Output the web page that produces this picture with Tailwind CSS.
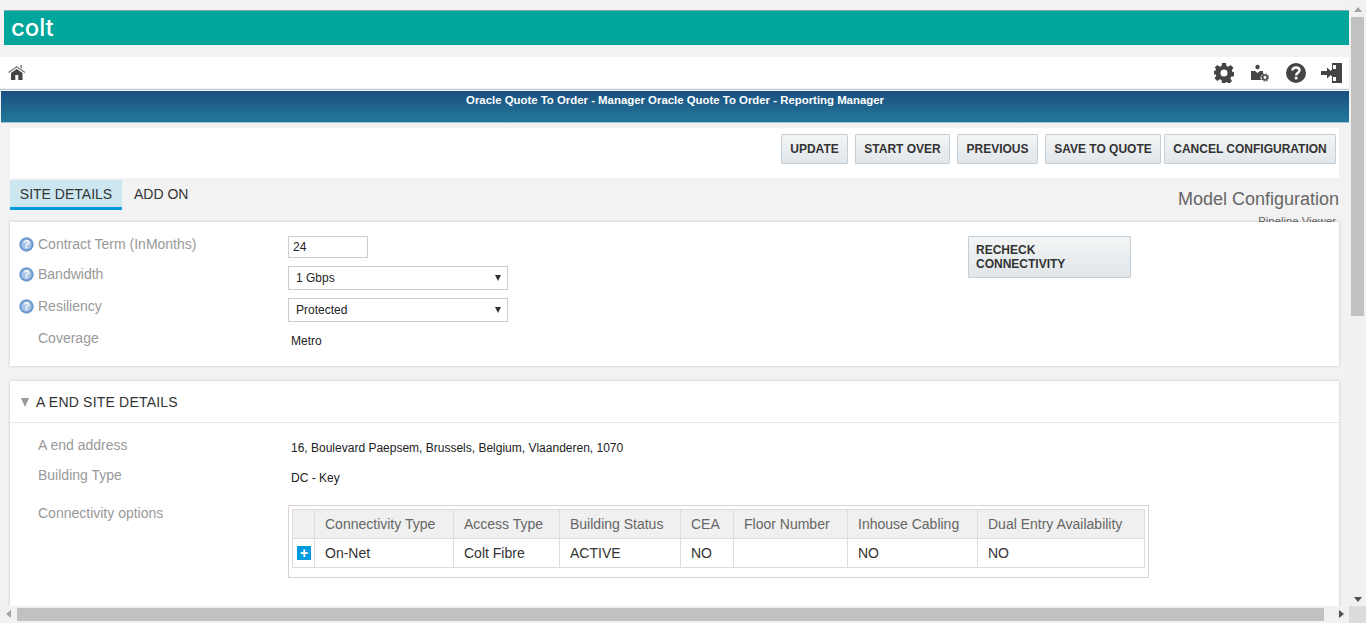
<!DOCTYPE html>
<html>
<head>
<meta charset="utf-8">
<title>Model Configuration</title>
<script src="https://cdn.jsdelivr.net/npm/@tailwindcss/browser@4"></script>
</head>
<body class="relative w-[1366px] h-[623px] overflow-hidden bg-[#f2f2f2] font-['Liberation_Sans',Arial,sans-serif] text-[#222]">

<div class="w-[1349px] h-[623px] overflow-hidden">
    <!-- Logo bar -->
    <div class="ml-[4px] mt-[10px] w-[1345px] h-[35px] bg-[#00a69c] border-t border-[#7fa9b5] pl-[7px] flex items-center">
        <span class="font-['Inter',sans-serif] font-medium text-[24px] leading-none text-white tracking-[-0.1px]">colt</span>
    </div>

    <!-- Icon bar -->
    <div class="mt-[12px] h-[31px] bg-white flex items-center justify-between pl-[8px] pr-[7px]">
        <svg class="w-[18px] h-[17px]" viewBox="0 0 18 17"><path fill="none" stroke="#777" stroke-width="1.300" d="M0.500 8.500 8.800 2.800l8.200 5.700"/><path fill="#777" d="M12.500 1h1.500v3.500l-1.500-1z"/><path fill="#444" fill-rule="evenodd" d="M8.800 5 14.500 9v7H3V9zM7.300 11v5h3v-5z"/></svg>
        <div class="flex items-center">
            <svg class="w-[20px] h-[20px]" viewBox="0 0 20 20"><path fill="#444" fill-rule="evenodd" d="M8 0h4l.5 3 1.700.7L16.700 2l2.800 2.800-1.700 2.500.7 1.700 1.500.3v4l-3 .5-.7 1.700 1.700 2.500-2.800 2.800-2.500-1.700-1.700.7L12 20H8l-.5-3-1.700-.7L3.300 18 .5 15.200l1.700-2.500-.7-1.700L0 12V8l1.500-.5.7-1.700L.5 4.800 3.300 2l2.500 1.700L7.500 3zM10 6.500a3.500 3.500 0 1 0 0 7 3.500 3.500 0 0 0 0-7z"/></svg>
            <svg class="ml-[17px] w-[18px] h-[18px]" viewBox="0 0 18 18"><circle cx="6.500" cy="3" r="2.200" fill="#444"/><path fill="#444" d="M0 7h4l2.500 2L9 7h3v3.200a4.500 4.500 0 0 0-2 5.800H0z"/><circle cx="14" cy="13.500" r="2.300" fill="none" stroke="#555" stroke-width="1.800"/><circle cx="14" cy="13.500" r="3.600" fill="none" stroke="#555" stroke-width="1.200" stroke-dasharray="1.400 1.400"/></svg>
            <svg class="ml-[17px] w-[20px] h-[20px]" viewBox="0 0 21 21"><circle cx="10.500" cy="10.500" r="10.500" fill="#444"/><path fill="none" stroke="#fff" stroke-width="2.600" d="M6.800 8c0-2.200 1.700-3.300 3.700-3.300s3.700 1.100 3.700 3c0 2.600-3.500 2.500-3.500 5.300"/><rect x="9.200" y="14.500" width="2.800" height="2.700" fill="#fff"/></svg>
            <svg class="ml-[15px] w-[21px] h-[20px]" viewBox="0 0 21 20"><path fill="#444" d="M11 0h10v20H11v-2h3V2h-3z"/><path fill="#444" d="M11 2h3v16h-3v-5h-1V7h1z"/><rect x="12" y="2" width="3" height="4" fill="#fff"/><rect x="12" y="14" width="3" height="4" fill="#fff"/><path fill="#444" d="M0 8h6V4.500L12 10l-6 5.500V12H0z"/></svg>
        </div>
    </div>

    <!-- Title bar -->
    <div class="mt-[1px] border-t border-[#bccbd8] pt-[1px]">
        <div class="ml-[1px] h-[32px] bg-gradient-to-b from-[#1a4f7f] to-[#24799b] text-center text-white text-[11.400px] font-bold leading-[19px] border-b border-[#a9bfcd]">Oracle Quote To Order - Manager Oracle Quote To Order - Reporting Manager</div>
    </div>

    <div class="pl-[10px] pr-[10px]">
        <!-- Action buttons -->
        <div class="mt-[5px] h-[50px] bg-white flex justify-end items-start pt-[6px] pr-[3px] text-[12px] font-bold text-[#333]">
            <button class="h-[30px] w-[67px] rounded-[1px] border border-[#c3ced6] bg-gradient-to-b from-[#f3f5f6] to-[#e2e6e9]">UPDATE</button>
            <button class="ml-[7px] h-[30px] w-[95px] rounded-[1px] border border-[#c3ced6] bg-gradient-to-b from-[#f3f5f6] to-[#e2e6e9]">START OVER</button>
            <button class="ml-[7px] h-[30px] w-[81px] rounded-[1px] border border-[#c3ced6] bg-gradient-to-b from-[#f3f5f6] to-[#e2e6e9]">PREVIOUS</button>
            <button class="ml-[7px] h-[30px] w-[116px] rounded-[1px] border border-[#c3ced6] bg-gradient-to-b from-[#f3f5f6] to-[#e2e6e9]">SAVE TO QUOTE</button>
            <button class="ml-[3px] h-[30px] w-[172px] rounded-[1px] border border-[#c3ced6] bg-gradient-to-b from-[#f3f5f6] to-[#e2e6e9]">CANCEL CONFIGURATION</button>
        </div>

        <!-- Tabs and page title -->
        <div class="relative h-[44px] flex items-start justify-between">
            <div class="flex mt-[2px] text-[14px] text-[#333]">
                <div class="w-[112px] h-[30px] bg-[#cde7f1] border-b-[3px] border-[#009bdf] text-center leading-[28px]">SITE DETAILS</div>
                <div class="ml-[12px] leading-[28px]">ADD ON</div>
            </div>
            <div class="text-right">
                <div class="text-[18px] leading-[20px] text-[#666] mt-[11px]">Model Configuration</div>
                <div class="text-[11.300px] leading-[12px] text-[#666] mt-[6px] mr-[3px]">Pipeline Viewer</div>
            </div>
        </div>

        <!-- Configuration card -->
        <div class="relative h-[144px] bg-white shadow-[0_0_3px_rgba(0,0,0,0.2)] pt-[14px] pl-[9px] text-[14px]">
            <div class="h-[32px] flex">
                <svg class="mt-[1px] w-[15px] h-[15px]" viewBox="0 0 15 15"><circle cx="7.500" cy="7.500" r="7.200" fill="#6d9bd0"/><circle cx="7.500" cy="7.500" r="5" fill="#a9c6e6"/><text x="7.500" y="11" text-anchor="middle" font-size="10" font-weight="bold" fill="#fff" font-family="Liberation Sans">?</text></svg>
                <span class="ml-[4px] w-[250px] leading-[17px] text-[#999]">Contract Term (InMonths)</span>
                <div class="w-[80px] h-[22px] border border-[#ccc] pl-[4px] text-[12px] leading-[20px]">24</div>
            </div>
            <div class="h-[32px] flex -mt-[2px]">
                <svg class="mt-[1px] w-[15px] h-[15px]" viewBox="0 0 15 15"><circle cx="7.500" cy="7.500" r="7.200" fill="#6d9bd0"/><circle cx="7.500" cy="7.500" r="5" fill="#a9c6e6"/><text x="7.500" y="11" text-anchor="middle" font-size="10" font-weight="bold" fill="#fff" font-family="Liberation Sans">?</text></svg>
                <span class="ml-[4px] w-[250px] leading-[17px] text-[#999]">Bandwidth</span>
                <div class="relative w-[220px] h-[24px] border border-[#ccc] pl-[7px] text-[12px] leading-[22px]">1 Gbps<span class="absolute right-[6px] top-[8px] w-0 h-0 border-x-[3px] border-t-[6px] border-x-transparent border-t-[#333]"></span></div>
            </div>
            <div class="h-[32px] flex">
                <svg class="mt-[1px] w-[15px] h-[15px]" viewBox="0 0 15 15"><circle cx="7.500" cy="7.500" r="7.200" fill="#6d9bd0"/><circle cx="7.500" cy="7.500" r="5" fill="#a9c6e6"/><text x="7.500" y="11" text-anchor="middle" font-size="10" font-weight="bold" fill="#fff" font-family="Liberation Sans">?</text></svg>
                <span class="ml-[4px] w-[250px] leading-[17px] text-[#999]">Resiliency</span>
                <div class="relative w-[220px] h-[24px] border border-[#ccc] pl-[7px] text-[12px] leading-[22px]">Protected<span class="absolute right-[6px] top-[8px] w-0 h-0 border-x-[3px] border-t-[6px] border-x-transparent border-t-[#333]"></span></div>
            </div>
            <div class="flex">
                <span class="ml-[19px] w-[250px] leading-[17px] text-[#999]">Coverage</span>
                <span class="ml-[3px] mt-[4px] text-[12px] leading-[14px]">Metro</span>
            </div>
            <button class="absolute left-[958px] top-[14px] w-[163px] h-[42px] rounded-[1px] border border-[#c3ced6] bg-gradient-to-b from-[#f3f5f6] to-[#e2e6e9] pl-[7px] text-left text-[12px] leading-[14px] font-bold text-[#333]">RECHECK<br>CONNECTIVITY</button>
        </div>

        <!-- A end site details -->
        <div class="mt-[15px] h-[240px] bg-white shadow-[0_0_3px_rgba(0,0,0,0.2)]">
            <div class="h-[42px] border-b border-[#e6e6e6] flex items-center pt-[1px] pl-[11px] text-[14px] text-[#333]">
                <span class="w-0 h-0 border-x-[4px] border-t-[9px] border-x-transparent border-t-[#999]"></span>
                <span class="ml-[7px] tracking-[0.2px]">A END SITE DETAILS</span>
            </div>
            <div class="pl-[28px] pt-[14px] text-[14px]">
                <div class="h-[30px] flex">
                    <span class="w-[253px] leading-[17px] text-[#999]">A end address</span>
                    <span class="mt-[4px] text-[12px] leading-[14px]">16, Boulevard Paepsem, Brussels, Belgium, Vlaanderen, 1070</span>
                </div>
                <div class="h-[38px] flex">
                    <span class="w-[253px] leading-[17px] text-[#999]">Building Type</span>
                    <span class="mt-[4px] text-[12px] leading-[14px]">DC - Key</span>
                </div>
                <div class="flex">
                    <span class="w-[250px] leading-[17px] text-[#999]">Connectivity options</span>
                    <div class="w-[861px] h-[73px] border border-[#dccfd4] p-[3px]">
                        <table class="w-[853px] table-fixed border-collapse text-[14px]">
                            <thead>
                                <tr class="h-[29px] bg-[#f0f0f0] text-left text-[#666]">
                                    <th class="w-[22px] border border-[#ddd] font-normal"></th>
                                    <th class="w-[139px] border border-[#ddd] pl-[10px] font-normal">Connectivity Type</th>
                                    <th class="w-[106px] border border-[#ddd] pl-[10px] font-normal">Access Type</th>
                                    <th class="w-[121px] border border-[#ddd] pl-[10px] font-normal">Building Status</th>
                                    <th class="w-[53px] border border-[#ddd] pl-[10px] font-normal">CEA</th>
                                    <th class="w-[114px] border border-[#ddd] pl-[10px] font-normal">Floor Number</th>
                                    <th class="w-[130px] border border-[#ddd] pl-[10px] font-normal">Inhouse Cabling</th>
                                    <th class="border border-[#ddd] pl-[10px] font-normal">Dual Entry Availability</th>
                                </tr>
                            </thead>
                            <tbody>
                                <tr class="h-[29px] text-[#333]">
                                    <td class="border border-[#ddd] pl-[4px]"><span class="flex items-center justify-center w-[14px] h-[14px] bg-[#009bdf] text-white text-[14px] font-bold leading-none">+</span></td>
                                    <td class="border border-[#ddd] pl-[10px]">On-Net</td>
                                    <td class="border border-[#ddd] pl-[10px]">Colt Fibre</td>
                                    <td class="border border-[#ddd] pl-[10px]">ACTIVE</td>
                                    <td class="border border-[#ddd] pl-[10px]">NO</td>
                                    <td class="border border-[#ddd] pl-[10px]"></td>
                                    <td class="border border-[#ddd] pl-[10px]">NO</td>
                                    <td class="border border-[#ddd] pl-[10px]">NO</td>
                                </tr>
                            </tbody>
                        </table>
                    </div>
                </div>
            </div>
        </div>
    </div>
</div>

<!-- Vertical scrollbar -->
<div class="absolute right-0 top-0 w-[17px] h-[606px] bg-[#f1f1f1]">
    <span class="absolute left-[5px] top-[7px] w-0 h-0 border-x-[4px] border-b-[5px] border-x-transparent border-b-[#a3a3a3]"></span>
    <div class="absolute left-[2px] top-[17px] w-[13px] h-[299px] bg-[#c1c1c1]"></div>
    <span class="absolute left-[5px] bottom-[4px] w-0 h-0 border-x-[4px] border-t-[5px] border-x-transparent border-t-[#505050]"></span>
</div>
<!-- Horizontal scrollbar -->
<div class="absolute left-0 bottom-0 w-[1366px] h-[17px] bg-[#f1f1f1]">
    <span class="absolute left-[6px] top-[4px] w-0 h-0 border-y-[4px] border-r-[5px] border-y-transparent border-r-[#a3a3a3]"></span>
    <div class="absolute left-[17px] top-[2px] w-[1307px] h-[13px] bg-[#c1c1c1]"></div>
    <span class="absolute left-[1339px] top-[4px] w-0 h-0 border-y-[4px] border-l-[5px] border-y-transparent border-l-[#505050]"></span>
    <div class="absolute right-0 top-0 w-[17px] h-[17px] bg-[#dcdcdc]"></div>
</div>
</body>
</html>
